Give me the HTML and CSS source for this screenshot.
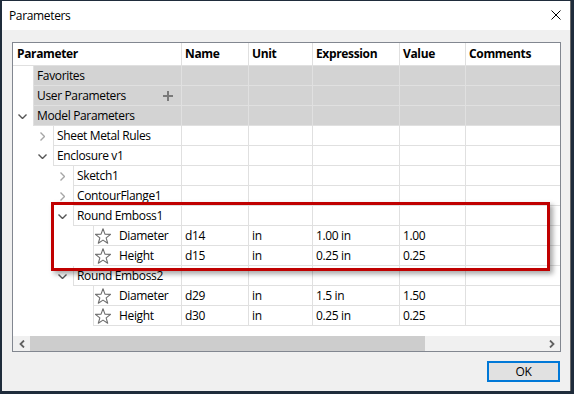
FILE: index.html
```html
<!DOCTYPE html>
<html>
<head>
<meta charset="utf-8">
<link rel="stylesheet" href="styles.css">
</head>
<body>
<div class="window">
  <div class="titlebar">
    <span class="title">Parameters</span>
    <svg class="close" width="10" height="10" viewBox="0 0 10 10"><path d="M0.5 0.5 L9.5 9.5 M9.5 0.5 L0.5 9.5" stroke="#000" stroke-width="1" fill="none"/></svg>
  </div>
  <div class="content">
    <div class="frame">
      <div class="row head">
        <div class="cell first">Parameter</div>
        <div class="cell">Name</div>
        <div class="cell">Unit</div>
        <div class="cell">Expression</div>
        <div class="cell">Value</div>
        <div class="cell">Comments</div>
      </div>

      <div class="row group">
        <div class="tree"><span class="chev"></span><div class="label">Favorites</div></div>
        <div class="cell"></div><div class="cell"></div><div class="cell"></div><div class="cell"></div><div class="cell"></div>
      </div>
      <div class="row group">
        <div class="tree"><span class="chev"></span><div class="label">User Parameters<svg class="plus" width="10" height="10" viewBox="0 0 10 10"><path d="M5 0 V10 M0 5 H10" stroke="#7a7a7a" stroke-width="2"/></svg></div></div>
        <div class="cell"></div><div class="cell"></div><div class="cell"></div><div class="cell"></div><div class="cell"></div>
      </div>
      <div class="row group">
        <div class="tree"><span class="chev"><svg width="9" height="5" viewBox="0 0 9 5"><path d="M0.5 0.5 L4.5 4.5 L8.5 0.5" fill="none" stroke="#555" stroke-width="1.4"/></svg></span><div class="label">Model Parameters</div></div>
        <div class="cell"></div><div class="cell"></div><div class="cell"></div><div class="cell"></div><div class="cell"></div>
      </div>

      <div class="row">
        <div class="tree"><span class="ind1"></span><span class="chev"><svg width="5" height="9" viewBox="0 0 5 9"><path d="M0.5 0.5 L4.5 4.5 L0.5 8.5" fill="none" stroke="#a6a6a6" stroke-width="1.4"/></svg></span><div class="label">Sheet Metal Rules</div></div>
        <div class="cell"></div><div class="cell"></div><div class="cell"></div><div class="cell"></div><div class="cell"></div>
      </div>
      <div class="row">
        <div class="tree"><span class="ind1"></span><span class="chev"><svg width="9" height="5" viewBox="0 0 9 5"><path d="M0.5 0.5 L4.5 4.5 L8.5 0.5" fill="none" stroke="#555" stroke-width="1.4"/></svg></span><div class="label">Enclosure v1</div></div>
        <div class="cell"></div><div class="cell"></div><div class="cell"></div><div class="cell"></div><div class="cell"></div>
      </div>

      <div class="row">
        <div class="tree"><span class="ind2"></span><span class="chev"><svg width="5" height="9" viewBox="0 0 5 9"><path d="M0.5 0.5 L4.5 4.5 L0.5 8.5" fill="none" stroke="#a6a6a6" stroke-width="1.4"/></svg></span><div class="label">Sketch1</div></div>
        <div class="cell"></div><div class="cell"></div><div class="cell"></div><div class="cell"></div><div class="cell"></div>
      </div>
      <div class="row">
        <div class="tree"><span class="ind2"></span><span class="chev"><svg width="5" height="9" viewBox="0 0 5 9"><path d="M0.5 0.5 L4.5 4.5 L0.5 8.5" fill="none" stroke="#a6a6a6" stroke-width="1.4"/></svg></span><div class="label">ContourFlange1</div></div>
        <div class="cell"></div><div class="cell"></div><div class="cell"></div><div class="cell"></div><div class="cell"></div>
      </div>
      <div class="row">
        <div class="tree"><span class="ind2"></span><span class="chev"><svg width="9" height="5" viewBox="0 0 9 5"><path d="M0.5 0.5 L4.5 4.5 L8.5 0.5" fill="none" stroke="#555" stroke-width="1.4"/></svg></span><div class="label">Round Emboss1</div></div>
        <div class="cell"></div><div class="cell"></div><div class="cell"></div><div class="cell"></div><div class="cell"></div>
      </div>
      <div class="row">
        <div class="tree"><span class="ind3"></span><div class="label param"><svg class="star" width="16" height="16" viewBox="0 0 16 16"><polygon points="8,0.8 9.94,6.13 15.61,6.33 11.14,9.82 12.7,15.27 8,12.1 3.3,15.27 4.86,9.82 0.39,6.33 6.06,6.13" fill="none" stroke="#6e6e6e" stroke-width="1.1" stroke-linejoin="round"/></svg>Diameter</div></div>
        <div class="cell">d14</div><div class="cell">in</div><div class="cell">1.00 in</div><div class="cell">1.00</div><div class="cell"></div>
      </div>
      <div class="row">
        <div class="tree"><span class="ind3"></span><div class="label param"><svg class="star" width="16" height="16" viewBox="0 0 16 16"><polygon points="8,0.8 9.94,6.13 15.61,6.33 11.14,9.82 12.7,15.27 8,12.1 3.3,15.27 4.86,9.82 0.39,6.33 6.06,6.13" fill="none" stroke="#6e6e6e" stroke-width="1.1" stroke-linejoin="round"/></svg>Height</div></div>
        <div class="cell">d15</div><div class="cell">in</div><div class="cell">0.25 in</div><div class="cell">0.25</div><div class="cell"></div>
      </div>
      <div class="row">
        <div class="tree"><span class="ind2"></span><span class="chev"><svg width="9" height="5" viewBox="0 0 9 5"><path d="M0.5 0.5 L4.5 4.5 L8.5 0.5" fill="none" stroke="#555" stroke-width="1.4"/></svg></span><div class="label">Round Emboss2</div></div>
        <div class="cell"></div><div class="cell"></div><div class="cell"></div><div class="cell"></div><div class="cell"></div>
      </div>
      <div class="row">
        <div class="tree"><span class="ind3"></span><div class="label param"><svg class="star" width="16" height="16" viewBox="0 0 16 16"><polygon points="8,0.8 9.94,6.13 15.61,6.33 11.14,9.82 12.7,15.27 8,12.1 3.3,15.27 4.86,9.82 0.39,6.33 6.06,6.13" fill="none" stroke="#6e6e6e" stroke-width="1.1" stroke-linejoin="round"/></svg>Diameter</div></div>
        <div class="cell">d29</div><div class="cell">in</div><div class="cell">1.5 in</div><div class="cell">1.50</div><div class="cell"></div>
      </div>
      <div class="row">
        <div class="tree"><span class="ind3"></span><div class="label param"><svg class="star" width="16" height="16" viewBox="0 0 16 16"><polygon points="8,0.8 9.94,6.13 15.61,6.33 11.14,9.82 12.7,15.27 8,12.1 3.3,15.27 4.86,9.82 0.39,6.33 6.06,6.13" fill="none" stroke="#6e6e6e" stroke-width="1.1" stroke-linejoin="round"/></svg>Height</div></div>
        <div class="cell">d30</div><div class="cell">in</div><div class="cell">0.25 in</div><div class="cell">0.25</div><div class="cell"></div>
      </div>

      <div class="hscroll">
        <div class="sbtn"><svg width="6" height="8" viewBox="0 0 6 8"><path d="M5 0.5 L1.5 4 L5 7.5" fill="none" stroke="#606060" stroke-width="1.8"/></svg></div>
        <div class="thumb"></div>
        <div class="track"></div>
        <div class="sbtn"><svg width="6" height="8" viewBox="0 0 6 8"><path d="M1 0.5 L4.5 4 L1 7.5" fill="none" stroke="#606060" stroke-width="1.8"/></svg></div>
      </div>

      <div class="highlight"></div>
    </div>
    <div class="footer">
      <button class="ok">OK</button>
    </div>
  </div>
</div>
</body>
</html>
```

FILE: styles.css
```css
* { box-sizing: border-box; }
html, body { margin: 0; padding: 0; }
body {
  background: #1f2c3b;
  width: 574px;
  height: 394px;
  padding: 1px 0 0 2px;
  font-family: "Open Sans", "Noto Sans", sans-serif;
  font-size: 12px;
  letter-spacing: -0.35px;
  color: #000;
  overflow: hidden;
}
.window {
  width: 569px;
  height: 390px;
  background: #f0f0f0;
  display: flex;
  flex-direction: column;
  border-right: 1px solid #6d6d6d;
}
.titlebar {
  height: 29px;
  background: #fff;
  display: flex;
  align-items: center;
  justify-content: space-between;
  padding: 0 9px 0 7px;
}
.title { padding-bottom: 1px; }
.close { display: block; margin-top: -1px; }
.content {
  flex: 1;
  padding: 12px 9px 0 10px;
  display: flex;
  flex-direction: column;
}
.frame {
  position: relative;
  height: 310px;
  border: 1px solid #828790;
  background: #fff;
  display: flex;
  flex-direction: column;
}
.row {
  display: grid;
  grid-template-columns: 168px 67px 64px 87px 66px 1fr;
  height: 20px;
  line-height: 19px;
}
.row.head {
  height: 23px;
  line-height: 22px;
  font-weight: 700;
  border-bottom: 1px solid #e0e0e0;
}
.cell {
  border-left: 1px solid #e0e0e0;
  border-bottom: 1px solid #e0e0e0;
  padding-left: 3px;
  white-space: nowrap;
}
.head .cell { border-bottom: none; }
.head .cell.first { border-left: none; padding-left: 4px; }
.group .cell { background: #d3d3d3; }
.tree {
  display: flex;
  align-items: stretch;
  min-width: 0;
}
.ind1 { width: 20px; flex: none; }
.ind2 { width: 40px; flex: none; }
.ind3 { width: 80px; flex: none; }
.chev {
  width: 20px;
  flex: none;
  display: flex;
  align-items: center;
  justify-content: center;
  padding-right: 1px;
}
.chev svg { display: block; }
.label {
  flex: 1;
  display: flex;
  align-items: center;
  border-left: 1px solid #e0e0e0;
  border-bottom: 1px solid #e0e0e0;
  padding-left: 3px;
  white-space: nowrap;
  min-width: 0;
}
.group .label { background: #d3d3d3; }
.plus { margin-left: auto; margin-right: 8px; display: block; }
.label.param { padding-left: 1px; }
.star { display: block; margin-right: 8px; flex: none; }
.hscroll {
  margin-top: auto;
  height: 15px;
  display: flex;
  background: #f0f0f0;
}
.sbtn {
  width: 17px;
  display: flex;
  align-items: center;
  justify-content: center;
}
.sbtn svg { display: block; }
.thumb { width: 395px; background: #cdcdcd; }
.track { flex: 1; }
.highlight {
  position: absolute;
  left: 38px;
  top: 159px;
  width: 499px;
  height: 69px;
  border: 3px solid #c00000;
  box-shadow: 3px 3px 5px rgba(0, 0, 0, 0.35);
  pointer-events: none;
}
.footer {
  display: flex;
  justify-content: flex-end;
  padding-top: 9px;
}
.ok {
  width: 73px;
  height: 21px;
  border: 2px solid #0078d7;
  background: #e1e1e1;
  font-family: "Open Sans", "Noto Sans", sans-serif;
  font-size: 12px;
  letter-spacing: -0.35px;
  color: #000;
  padding: 0;
  margin-right: 1px;
  line-height: 15px;
}
```
